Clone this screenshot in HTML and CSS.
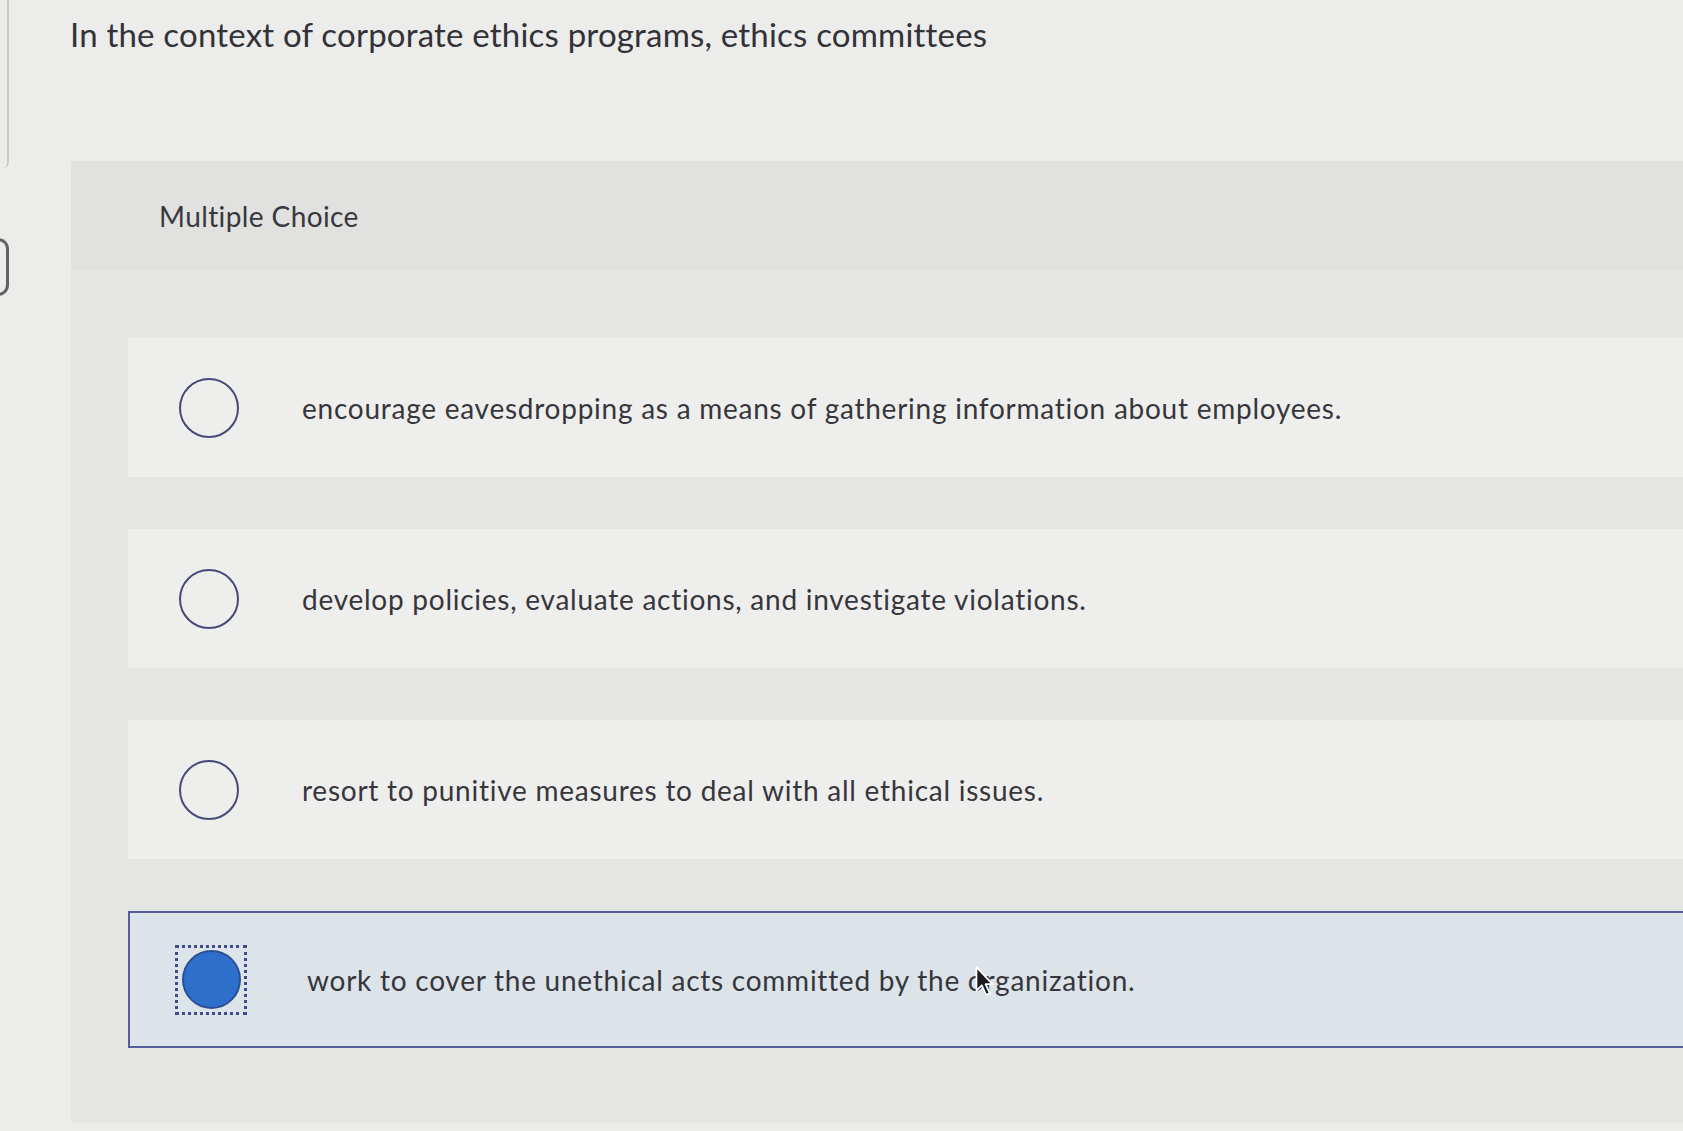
FILE: index.html
```html
<!DOCTYPE html>
<html lang="en">
<head>
<meta charset="utf-8">
<title>Multiple Choice</title>
<link rel="stylesheet" href="styles.css">
</head>
<body>
<div class="page">
  <div class="rail">
    <div class="rail-card"></div>
    <div class="rail-knob"></div>
  </div>
  <main class="main">
    <h1 class="question">In the context of corporate ethics programs, ethics committees</h1>
    <section class="panel">
      <div class="panel-head">Multiple Choice</div>
      <div class="panel-body">
        <label class="option">
          <span class="radio"></span>
          <span class="option-text">encourage eavesdropping as a means of gathering information about employees.</span>
        </label>
        <label class="option">
          <span class="radio"></span>
          <span class="option-text">develop policies, evaluate actions, and investigate violations.</span>
        </label>
        <label class="option">
          <span class="radio"></span>
          <span class="option-text">resort to punitive measures to deal with all ethical issues.</span>
        </label>
        <label class="option selected">
          <span class="focus-ring"><span class="radio filled"></span></span>
          <span class="option-text">work to cover the unethical acts committed by the <span class="cursor-anchor">o<svg class="cursor" width="22" height="32" viewBox="0 0 20 30"><path d="M2 2 L2 24 L7 19 L11 28 L14.5 26.5 L10.5 18 L17 18 Z" fill="#1c1c1f" stroke="#ffffff" stroke-width="1.6" stroke-linejoin="round"/></svg></span>rganization.</span>
        </label>
      </div>
    </section>
  </main>
</div>
</body>
</html>
```

FILE: styles.css
```css
html, body {
  margin: 0;
  padding: 0;
}

body {
  width: 1683px;
  height: 1131px;
  overflow: hidden;
  background: #ececea;
  font-family: Lato, "Open Sans", "Liberation Sans", sans-serif;
  color: #36363c;
}

.page {
  display: flex;
  height: 100%;
}

.rail {
  width: 11px;
  flex: none;
  display: flex;
  flex-direction: column;
}

.rail-card {
  height: 168px;
  width: 9px;
  border-right: 2px solid #c9c9c8;
  border-bottom-right-radius: 6px;
  box-sizing: border-box;
}

.rail-knob {
  margin-top: 70px;
  width: 11px;
  height: 58px;
  border: 3px solid #626262;
  border-left: none;
  border-radius: 0 29px 29px 0;
  box-sizing: border-box;
  margin-left: -2px;
}

.main {
  flex: 1;
  padding-left: 59px;
  display: flex;
  flex-direction: column;
  min-width: 0;
}

.question {
  margin: 0;
  padding-top: 13px;
  height: 161px;
  flex: none;
  box-sizing: border-box;
  font-size: 33px;
  font-weight: 400;
  letter-spacing: 0.2px;
  line-height: 42px;
  color: #323238;
  white-space: nowrap;
}

.panel {
  flex: 1;
  margin-bottom: 8px;
  margin-left: 1px;
  background: #e5e5e4;
  display: flex;
  flex-direction: column;
}

.panel-head {
  height: 109px;
  flex: none;
  background: #e1e1e0;
  padding-left: 88px;
  display: flex;
  align-items: center;
  font-size: 28px;
  letter-spacing: 0.4px;
  color: #38383e;
}

.panel-body {
  padding: 68px 0 0 57px;
  display: flex;
  flex-direction: column;
  gap: 52px;
}

.option {
  height: 139px;
  background: #eeeeed;
  display: flex;
  align-items: center;
  padding-left: 51px;
  box-sizing: border-box;
  font-size: 28px;
  letter-spacing: 0.75px;
  color: #36363c;
}

.radio {
  width: 60px;
  height: 60px;
  flex: none;
  border: 2px solid #464a78;
  border-radius: 50%;
  box-sizing: border-box;
}

.option-text {
  margin-left: 63px;
  white-space: nowrap;
}

.option.selected {
  background: #dce4e9;
  border: 2px solid #575d99;
  border-right: none;
  padding-left: 45px;
  height: 137px;
}

.focus-ring {
  width: 72px;
  height: 70px;
  flex: none;
  border: 3px dotted #3e4a8a;
  box-sizing: border-box;
  display: flex;
  align-items: center;
  justify-content: center;
}

.radio.filled {
  width: 59px;
  height: 59px;
  background: #2e6fcc;
  border: 2px solid #2b4f95;
}

.selected .option-text {
  margin-left: 60px;
}

.cursor-anchor {
  position: relative;
}

.cursor {
  position: absolute;
  left: 6px;
  top: 2px;
}
```
